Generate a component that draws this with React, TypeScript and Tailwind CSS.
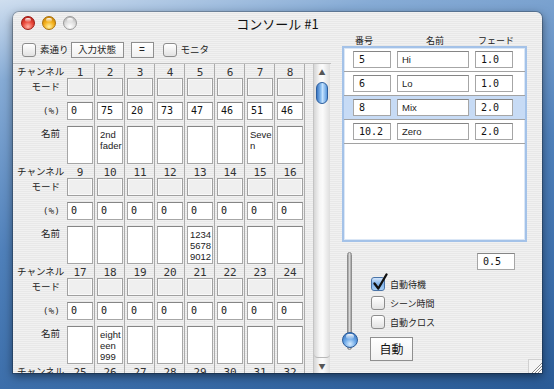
import React from "react";

const groups: { start: number; pct: string[]; names: Record<number, string> }[] = [
  { start: 1, pct: ["0", "75", "20", "73", "47", "46", "51", "46"], names: { 2: "2nd fader", 7: "Seven" } },
  { start: 9, pct: ["0", "0", "0", "0", "0", "0", "0", "0"], names: { 13: "123456789012" } },
  { start: 17, pct: ["0", "0", "0", "0", "0", "0", "0", "0"], names: { 18: "eighteen 999" } },
  { start: 25, pct: ["0", "0", "0", "0", "0", "0", "0", "0"], names: {} },
];

const scenes = [
  { n: "5", name: "Hi", fade: "1.0", sel: false },
  { n: "6", name: "Lo", fade: "1.0", sel: false },
  { n: "8", name: "Mix", fade: "2.0", sel: true },
  { n: "10.2", name: "Zero", fade: "2.0", sel: false },
];

function CheckBox({ checked = false }: { checked?: boolean }) {
  if (checked) {
    return (
      <div className="relative w-[14px] h-[14px] shrink-0 rounded-[3px] border border-[#4a74a8] bg-[image:linear-gradient(180deg,#d4e6fb_0%,#7fb2ea_50%,#a8d0f7_100%)]">
        <svg className="absolute left-[0px] top-[-5px]" width="16" height="18" viewBox="0 0 16 18">
          <path d="M2.5 10.5 L6.3 15.5 L14.5 1.5" fill="none" stroke="#111" strokeWidth="2.3" strokeLinecap="round" strokeLinejoin="round" />
        </svg>
      </div>
    );
  }
  return (
    <div className="w-[14px] h-[14px] shrink-0 rounded-[3px] border border-[#8c8c8c] bg-[image:linear-gradient(180deg,#ffffff_0%,#f1f1f1_50%,#e2e2e2_100%)] shadow-[inset_0_1px_0_#ffffff]" />
  );
}

function Light({ kind }: { kind: "red" | "yellow" | "gray" }) {
  const base =
    kind === "red"
      ? "border-[#9c1a14] bg-[image:radial-gradient(circle_at_50%_80%,#ffb4a6_0%,#ea4a3c_45%,#a8160f_100%)]"
      : kind === "yellow"
      ? "border-[#a8700a] bg-[image:radial-gradient(circle_at_50%_80%,#fff0a0_0%,#f5b21e_45%,#b87400_100%)]"
      : "border-[#9a9a9a] bg-[image:radial-gradient(circle_at_50%_80%,#ffffff_0%,#dcdcdc_50%,#a8a8a8_100%)]";
  return (
    <div className={"relative w-[14px] h-[14px] shrink-0 rounded-full border " + base}>
      <div className="absolute left-[3px] top-[1px] w-[6px] h-[4px] rounded-full bg-[image:linear-gradient(180deg,rgba(255,255,255,0.95),rgba(255,255,255,0.1))]" />
    </div>
  );
}

function Group({ g }: { g: (typeof groups)[number] }) {
  return (
    <div className="flex h-[100px] shrink-0">
      <div className="w-[52px] shrink-0 flex flex-col text-[#222] font-['Noto_Sans_CJK_JP','Noto_Sans',sans-serif] text-[9.5px] leading-none">
        <div className="h-[14px] flex items-center pl-[4px] pt-[2px] whitespace-nowrap">チャンネル</div>
        <div className="h-[18px] flex items-center justify-end pr-[5px]">モード</div>
        <div className="mt-[6px] h-[18px] flex items-center justify-end pr-[5px] font-['DejaVu_Sans_Mono',monospace] text-[9.5px] text-[#333]">(%)</div>
        <div className="mt-[6px] h-[38px] pt-[3px] flex justify-end pr-[5px]">名前</div>
      </div>
      {g.pct.map((p, i) => {
        const n = g.start + i;
        const name = g.names[n];
        return (
          <div key={n} className="w-[30px] shrink-0 border-r border-[#acacac] flex flex-col pl-[2px]">
            <div className="h-[14px] w-[26px] pt-[2px] flex items-center justify-center text-[11px] leading-none text-[#333] font-['DejaVu_Sans_Mono',monospace]">
              {n}
            </div>
            <div className="h-[18px] w-[26px] border border-[#a0a0a0] bg-[#efefef] shadow-[inset_0_0_0_1px_#fafafa]" />
            <div className="mt-[6px] h-[18px] w-[26px] border border-[#a6a6a6] border-t-[#858585] bg-white flex items-center pl-[3px] text-[10px] leading-none text-[#111] font-['DejaVu_Sans_Mono',monospace]">
              {p}
            </div>
            <div className="mt-[6px] h-[38px] w-[26px] border border-[#a6a6a6] border-t-[#858585] bg-white pl-[2px] pt-[2px] text-[9.5px] leading-[11px] text-[#222] font-['Liberation_Sans',sans-serif] break-words overflow-hidden">
              {name}
            </div>
          </div>
        );
      })}
    </div>
  );
}

function ScrollBar() {
  return (
    <div className="w-[17px] h-[310px] shrink-0 flex flex-col border-l border-[#c4c4c4] bg-[image:linear-gradient(90deg,#d6d6d6_0%,#f6f6f6_35%,#fbfbfb_55%,#dedede_100%)]">
      <div className="h-[16px] flex items-center justify-center text-[7px] leading-none text-[#555]">▲</div>
      <div className="mx-auto mt-[2px] w-[12px] h-[22px] rounded-full border border-[#2d5f9e] bg-[image:linear-gradient(90deg,#3b77c4_0%,#8ec0f0_40%,#c3e2ff_55%,#5a98dc_100%)]" />
      <div className="flex-1" />
      <div className="h-[4px] rounded-b-full border-b border-[#b8b8b8]" />
      <div className="h-[16px] flex items-center justify-center text-[7px] leading-none text-[#555]">▼</div>
    </div>
  );
}

export default function App() {
  return (
    <div className="relative w-[554px] h-[389px] overflow-hidden bg-[image:linear-gradient(168deg,#cfdeef_0%,#86abd5_16%,#4f80ba_50%,#3a6ca8_80%,#2a5b96_100%)]">
      <div className="absolute left-[13px] top-[12px] w-[529px] h-[361px] rounded-t-[6px] overflow-hidden bg-[image:repeating-linear-gradient(180deg,#f1f1f1_0px,#f1f1f1_1px,#e8e8e8_1px,#e8e8e8_2px)] shadow-[0_3px_10px_rgba(0,0,0,0.5),0_0_0_1px_rgba(0,0,0,0.22)] font-['Noto_Sans_CJK_JP','Noto_Sans',sans-serif]">
        {/* title bar */}
        <div className="relative h-[22px] flex items-start pt-[4px] pl-[8px] gap-[7px]">
          <Light kind="red" />
          <Light kind="yellow" />
          <Light kind="gray" />
          <div className="absolute inset-0 flex items-center justify-center text-[13px] leading-none text-[#111] pt-[1px]">
            コンソール #1
          </div>
        </div>
        <div className="flex h-[339px] overflow-hidden">
          {/* left part */}
          <div className="w-[318px] h-[339px] shrink-0 flex flex-col overflow-hidden">
            <div className="h-[29px] shrink-0 flex items-center pl-[9px] pt-[2px] text-[9.5px] leading-none text-[#222] whitespace-nowrap">
              <CheckBox />
              <div className="ml-[4px]">素通り</div>
              <div className="ml-[2px] w-[53px] h-[16px] flex items-center justify-center border border-[#8f8f8f] bg-[image:linear-gradient(180deg,#ffffff,#f0f0f0)]">入力状態</div>
              <div className="ml-[7px] w-[23px] h-[16px] flex items-center justify-center border border-[#8f8f8f] bg-[image:linear-gradient(180deg,#ffffff,#f0f0f0)] font-['Liberation_Sans',sans-serif] text-[10px]">=</div>
              <div className="ml-[9px]">
                <CheckBox />
              </div>
              <div className="ml-[4px]">モニタ</div>
            </div>
            <div className="flex h-[310px] shrink-0 overflow-hidden border-t border-[#bdbdbd]">
              <div className="w-[292px] h-[309px] shrink-0 flex flex-col overflow-hidden">
                {groups.map((g) => (
                  <Group key={g.start} g={g} />
                ))}
              </div>
              <div className="w-[8px] shrink-0" />
              <ScrollBar />
            </div>
          </div>
          {/* right part */}
          <div className="flex-1 flex flex-col">
            <div className="h-[12px] shrink-0 flex items-center pl-[24px] gap-[6px] text-[9px] leading-none text-[#222]">
              <div className="w-[38px]">番号</div>
              <div className="w-[72px] text-center">名前</div>
              <div className="w-[38px] text-center">フェード</div>
            </div>
            <div className="ml-[11px] w-[185px] h-[196px] shrink-0 border-2 border-[#a4c2e8] bg-white shadow-[inset_0_0_0_1px_#dbe7f6]">
              {scenes.map((s) => (
                <div
                  key={s.n}
                  className={
                    "h-[24px] flex items-center pl-[9px] gap-[6px] border-b border-[#a2a2a2] " +
                    (s.sel ? "bg-[#c7dbf5]" : "")
                  }
                >
                  <div className="w-[38px] h-[17px] border border-[#a6a6a6] border-t-[#858585] bg-white flex items-center pl-[5px] text-[10px] leading-none text-[#111] font-['DejaVu_Sans_Mono',monospace]">
                    {s.n}
                  </div>
                  <div className="w-[72px] h-[17px] border border-[#a6a6a6] border-t-[#858585] bg-white flex items-center pl-[4px] text-[9.5px] leading-none text-[#222] font-['Liberation_Sans',sans-serif]">
                    {s.name}
                  </div>
                  <div className="w-[38px] h-[17px] border border-[#a6a6a6] border-t-[#858585] bg-white flex items-center pl-[5px] text-[10px] leading-none text-[#111] font-['DejaVu_Sans_Mono',monospace]">
                    {s.fade}
                  </div>
                </div>
              ))}
            </div>
            <div className="flex pt-[10px]">
              <div className="relative ml-[11px] w-[16px] h-[98px] shrink-0">
                <div className="absolute left-[5px] top-0 bottom-0 w-[5px] rounded-full border border-[#8e8e8e] bg-[image:linear-gradient(90deg,#9a9a9a,#d8d8d8_50%,#a0a0a0)]" />
                <div className="absolute left-0 bottom-[2px] w-[16px] h-[16px] rounded-full border border-[#2a5a98] bg-[image:radial-gradient(circle_at_50%_78%,#d6ecff_0%,#6aa6e6_45%,#2c66b2_100%)]">
                  <div className="absolute left-[3px] top-[1px] w-[8px] h-[5px] rounded-full bg-[image:linear-gradient(180deg,rgba(255,255,255,0.95),rgba(255,255,255,0.15))]" />
                </div>
              </div>
              <div className="ml-[13px] w-[156px] flex flex-col">
                <div className="flex justify-end pr-[12px] mt-[1px]">
                  <div className="w-[38px] h-[17px] border border-[#a6a6a6] border-t-[#858585] bg-white flex items-center pl-[5px] text-[10px] leading-none text-[#111] font-['DejaVu_Sans_Mono',monospace]">
                    0.5
                  </div>
                </div>
                <div className="mt-[7px] flex flex-col gap-[5px] text-[9px] leading-none text-[#222]">
                  <div className="flex items-center h-[14px]">
                    <CheckBox checked />
                    <div className="ml-[5px]">自動待機</div>
                  </div>
                  <div className="flex items-center h-[14px]">
                    <CheckBox />
                    <div className="ml-[5px]">シーン時間</div>
                  </div>
                  <div className="flex items-center h-[14px]">
                    <CheckBox />
                    <div className="ml-[5px]">自動クロス</div>
                  </div>
                </div>
                <div className="mt-[8px] -ml-[1px] w-[43px] h-[24px] flex items-center justify-center border border-[#8f8f8f] bg-[image:linear-gradient(180deg,#ffffff,#f0f0f0)] text-[12px] leading-none text-[#111]">
                  自動
                </div>
              </div>
            </div>
          </div>
        </div>
        {/* resize grip */}
        <div className="absolute right-0 bottom-0 w-[14px] h-[14px] border-l border-t border-[#d0d0d0] bg-[#f4f4f4]">
          <svg width="14" height="14" viewBox="0 0 14 14" className="block">
            <path d="M3 13 L13 3 M6 13 L13 6 M9 13 L13 9" stroke="#8a8a8a" strokeWidth="1" />
            <path d="M4 13 L13 4 M7 13 L13 7 M10 13 L13 10" stroke="#ffffff" strokeWidth="1" />
          </svg>
        </div>
      </div>
    </div>
  );
}
